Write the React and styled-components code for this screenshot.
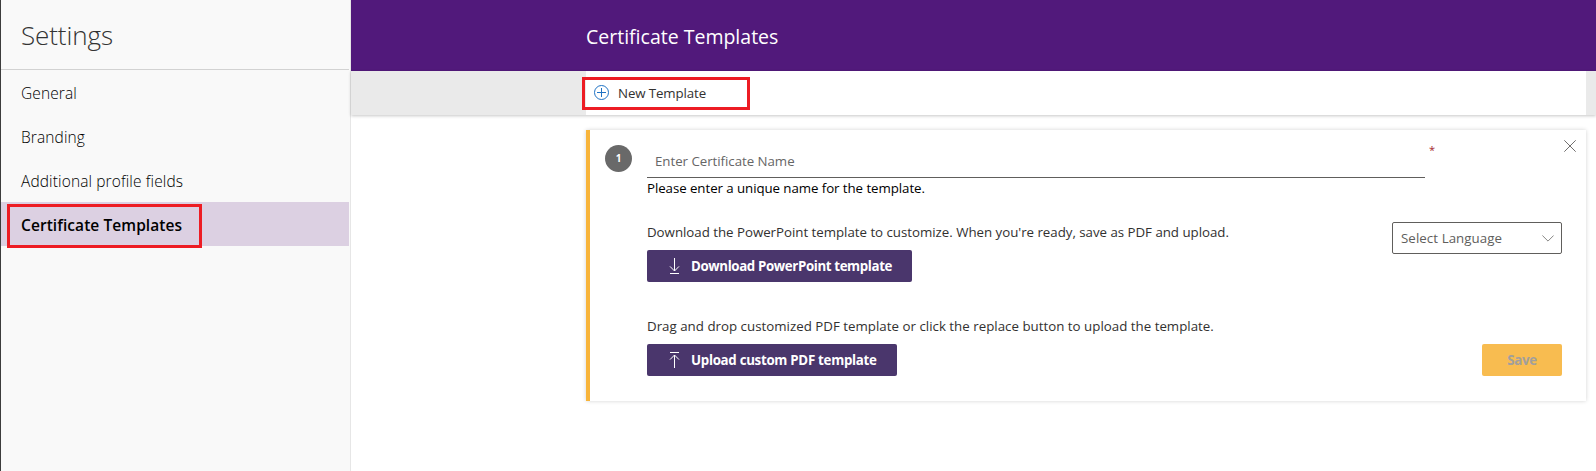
import React from "react";
import styled, { createGlobalStyle } from "styled-components";

const GlobalStyle = createGlobalStyle`
  *, *::before, *::after { box-sizing: border-box; }
  body {
    margin: 0;
    background: #fff;
    font-family: "Open Sans", "Noto Sans", sans-serif;
    color: #323130;
  }
  button, input { font-family: inherit; }
`;

const Page = styled.div`
  display: flex;
  height: 471px;
  overflow: hidden;
`;

const Sidebar = styled.aside`
  width: 351px;
  flex: none;
  background: #f9f9f9;
  border-left: 1px solid #3c3c3c;
  border-right: 1px solid #e6e6e6;
  padding-right: 1px;
`;

const SidebarTitle = styled.h1`
  margin: 0;
  height: 70px;
  padding-left: 20px;
  border-bottom: 1px solid #d2d2d2;
  font-size: 26px;
  font-weight: 300;
  line-height: 71px;
  letter-spacing: -0.1px;
  color: #333;
`;

const Nav = styled.nav`
  display: flex;
  flex-direction: column;
`;

const NavItem = styled.a`
  position: relative;
  height: 44px;
  padding-left: 20px;
  line-height: 47px;
  font-size: 15.5px;
  font-weight: ${(p) => (p.$active ? 600 : 300)};
  letter-spacing: ${(p) => (p.$active ? "0.07px" : "0.12px")};
  color: #000;
  background: ${(p) => (p.$active ? "#dcd0e2" : "transparent")};
`;

const Highlight = styled.span`
  position: absolute;
  left: ${(p) => p.$left}px;
  top: ${(p) => p.$top}px;
  width: ${(p) => p.$width}px;
  height: ${(p) => p.$height}px;
  border: 3px solid #ed1c24;
  pointer-events: none;
`;

const Main = styled.main`
  flex: 1;
  min-width: 0;
`;

const Header = styled.header`
  height: 71px;
  padding-left: 235px;
  background: #51197b;
  color: #fff;
  font-size: 19.5px;
  line-height: 73px;
`;

const Toolbar = styled.div`
  height: 44px;
  padding: 0 10px 0 235px;
  background: #eaeaea;
  box-shadow: 0 1px 3px rgba(0, 0, 0, 0.22);
`;

const ToolbarInner = styled.div`
  position: relative;
  display: flex;
  align-items: center;
  height: 44px;
  padding-left: 8px;
  gap: 8px;
  background: #fff;
`;

const ToolbarLabel = styled.span`
  font-size: 13.3px;
  line-height: 20px;
  letter-spacing: -0.12px;
`;

const Card = styled.section`
  display: flex;
  height: 271px;
  margin: 15px 10px 0 235px;
  border-left: 4px solid #f8b43a;
  background: #fff;
  box-shadow: 0 0 4px rgba(0, 0, 0, 0.18);
`;

const StepColumn = styled.div`
  width: 57px;
  flex: none;
  padding: 15px 0 0 15px;
`;

const StepBadge = styled.div`
  width: 27px;
  height: 27px;
  border-radius: 50%;
  background: #696969;
  color: #fff;
  font-size: 10px;
  font-weight: 700;
  line-height: 27px;
  text-align: center;
`;

const Form = styled.div`
  flex: 1;
  padding: 12px 24px 0 0;
`;

const NameRow = styled.div`
  display: flex;
  height: 36px;
`;

const NameInput = styled.input`
  width: 778px;
  height: 36px;
  padding: 2px 8px 0;
  border: 0;
  border-bottom: 1px solid #605e5c;
  outline: 0;
  background: transparent;
  font-size: 13.3px;
  letter-spacing: -0.04px;
  &::placeholder { color: #666; opacity: 1; }
`;

const Required = styled.span`
  margin-left: 4px;
  font-size: 11px;
  line-height: 15px;
  color: #a4262c;
`;

const CloseButton = styled.button`
  display: flex;
  margin: -2px -14px 0 auto;
  padding: 0;
  border: 0;
  width: 12px;
  height: 12px;
  background: none;
`;

const Hint = styled.p`
  margin: 0;
  height: 20px;
  font-size: 13.3px;
  line-height: 20px;
  letter-spacing: -0.07px;
  color: #000;
`;

const ActionRow = styled.div`
  display: flex;
  justify-content: space-between;
  height: 94px;
`;

const Actions = styled.div`
  margin-top: 24px;
`;

const Caption = styled.p`
  margin: 0 0 8px;
  font-size: 13.3px;
  line-height: 20px;
  letter-spacing: ${(p) => p.$tracking}px;
`;

const PrimaryButton = styled.button`
  display: flex;
  align-items: center;
  width: ${(p) => p.$width}px;
  height: 32px;
  gap: 10px;
  padding: 0 0 0 20px;
  border: 0;
  border-radius: 2px;
  background: #4a366c;
  color: #fff;
  font-size: 13.3px;
  font-weight: 700;
  letter-spacing: ${(p) => p.$tracking}px;
  white-space: nowrap;
`;

const LanguageSelect = styled.div`
  display: flex;
  align-items: center;
  justify-content: space-between;
  width: 170px;
  height: 32px;
  margin-top: 24px;
  padding: 0 7px 0 8px;
  border: 1px solid #605e5c;
  border-radius: 2px;
  font-size: 13.3px;
  letter-spacing: 0.07px;
  color: #605e5c;
`;

const SaveButton = styled.button`
  width: 80px;
  height: 32px;
  margin-top: 52px;
  padding: 0;
  border: 0;
  border-radius: 2px;
  background: #f8bc50;
  color: #a19f9d;
  font-size: 13.3px;
  font-weight: 700;
  letter-spacing: -0.3px;
`;

const Glyph = styled.svg`
  display: block;
  flex: none;
  fill: none;
  stroke: ${(p) => p.$color};
`;

const PlusCircle = () => (
  <Glyph width="16" height="16" viewBox="0 0 16 16" $color="#1f72c4">
    <circle cx="7.5" cy="7.5" r="7" />
    <path d="M7.5 3v9M3 7.5h9" />
  </Glyph>
);

const Cross = () => (
  <Glyph width="12" height="12" viewBox="0 0 12 12" $color="#605e5c">
    <path d="M.3.3l11.4 11.4M11.7.3L.3 11.7" strokeWidth="0.9" />
  </Glyph>
);

const Chevron = () => (
  <Glyph width="12" height="7" viewBox="0 0 12 7" $color="#7b7977">
    <path d="M.4.5L6 6.1L11.6.5" strokeWidth="0.9" />
  </Glyph>
);

const DownloadArrow = () => (
  <Glyph width="14" height="16" viewBox="0 0 14 16" $color="#fff">
    <path d="M7.5 0v13M3 8.4l4.5 4.6L12 8.4M3 15.5h9" />
  </Glyph>
);

const UploadArrow = () => (
  <Glyph width="14" height="16" viewBox="0 0 14 16" $color="#fff">
    <path d="M7.5 16V3M3 7.6L7.5 3L12 7.6M3 .5h9" />
  </Glyph>
);

export default function App() {
  return (
    <>
      <GlobalStyle />
      <Page>
        <Sidebar>
          <SidebarTitle>Settings</SidebarTitle>
          <Nav>
            <NavItem>General</NavItem>
            <NavItem>Branding</NavItem>
            <NavItem>Additional profile fields</NavItem>
            <NavItem $active>
              Certificate Templates
              <Highlight $left={6} $top={2} $width={195} $height={44} />
            </NavItem>
          </Nav>
        </Sidebar>
        <Main>
          <Header>Certificate Templates</Header>
          <Toolbar>
            <ToolbarInner>
              <PlusCircle />
              <ToolbarLabel>New Template</ToolbarLabel>
              <Highlight $left={-4} $top={6} $width={168} $height={33} />
            </ToolbarInner>
          </Toolbar>
          <Card>
            <StepColumn>
              <StepBadge>1</StepBadge>
            </StepColumn>
            <Form>
              <NameRow>
                <NameInput placeholder="Enter Certificate Name" />
                <Required>*</Required>
                <CloseButton aria-label="Close">
                  <Cross />
                </CloseButton>
              </NameRow>
              <Hint>Please enter a unique name for the template.</Hint>
              <ActionRow>
                <Actions>
                  <Caption $tracking={-0.025}>
                    Download the PowerPoint template to customize. When you're ready, save as PDF and upload.
                  </Caption>
                  <PrimaryButton $width={265} $tracking={-0.38}>
                    <DownloadArrow />
                    Download PowerPoint template
                  </PrimaryButton>
                </Actions>
                <LanguageSelect>
                  Select Language
                  <Chevron />
                </LanguageSelect>
              </ActionRow>
              <ActionRow>
                <Actions>
                  <Caption $tracking={0.012}>
                    Drag and drop customized PDF template or click the replace button to upload the template.
                  </Caption>
                  <PrimaryButton $width={250} $tracking={-0.29}>
                    <UploadArrow />
                    Upload custom PDF template
                  </PrimaryButton>
                </Actions>
                <SaveButton>Save</SaveButton>
              </ActionRow>
            </Form>
          </Card>
        </Main>
      </Page>
    </>
  );
}
